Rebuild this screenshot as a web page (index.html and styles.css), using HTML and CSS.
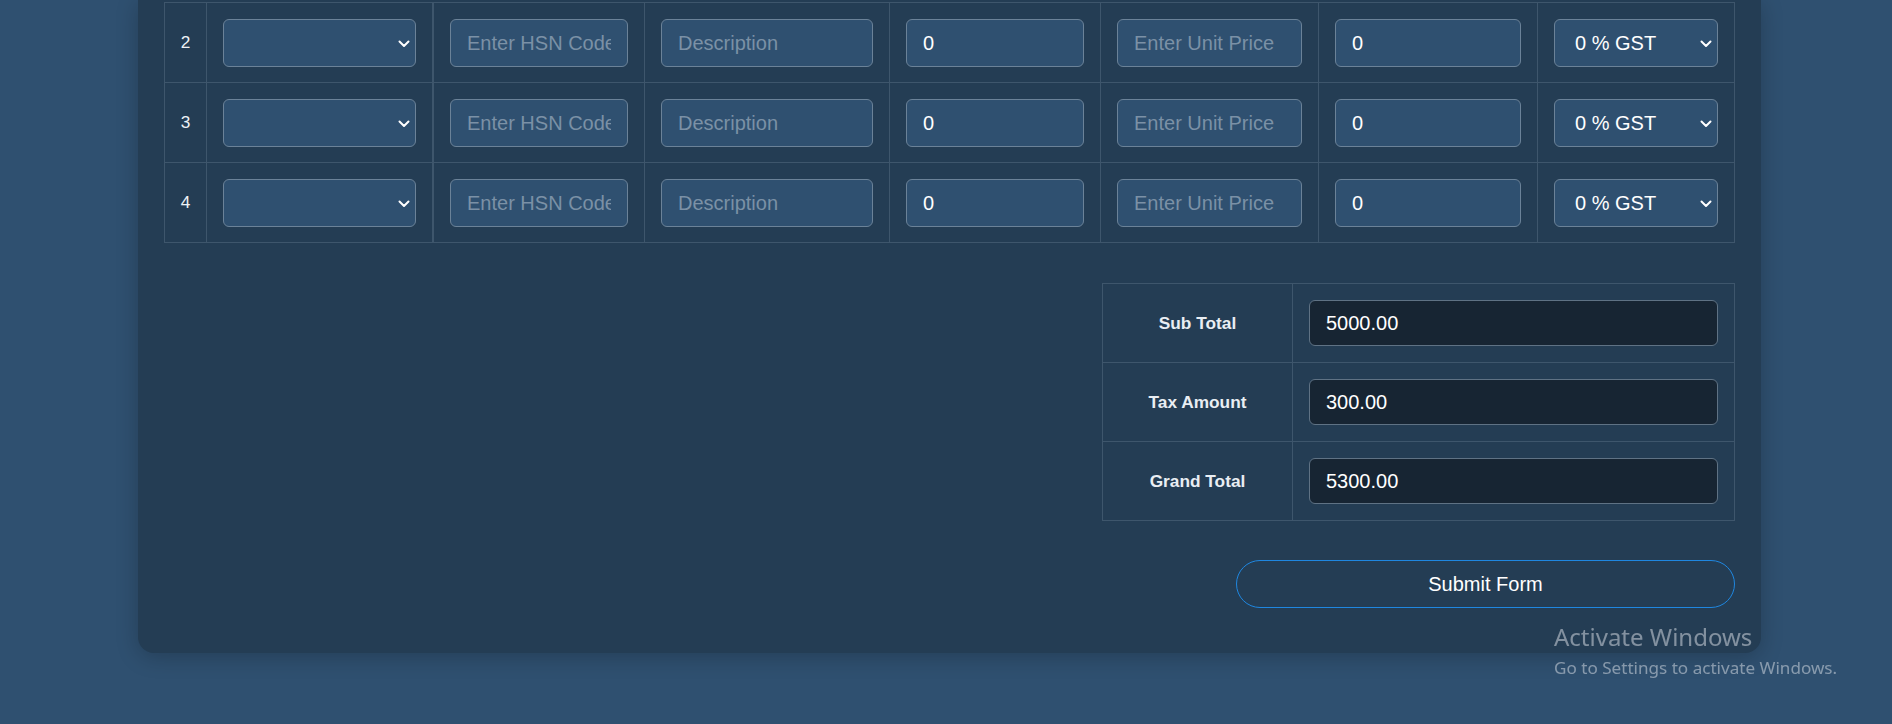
FILE: index.html
```html
<!DOCTYPE html>
<html lang="en">
<head>
<meta charset="utf-8">
<title>Invoice Items</title>
<link rel="stylesheet" href="styles.css">
</head>
<body>
<main class="card">
  <div class="items">
    <div class="item-row">
      <div class="cell num">2</div>
      <div class="cell"><span class="select-wrap"><select class="field" aria-label="Product"><option></option></select><svg class="chev" viewBox="0 0 12 8" aria-hidden="true"><path d="M1.5 1.5 6 6l4.5-4.5"/></svg></span></div>
      <div class="cell sep"><input class="field" type="text" placeholder="Enter HSN Code"></div>
      <div class="cell"><input class="field" type="text" placeholder="Description"></div>
      <div class="cell"><input class="field" type="text" value="0"></div>
      <div class="cell"><input class="field" type="text" placeholder="Enter Unit Price"></div>
      <div class="cell"><input class="field" type="text" value="0"></div>
      <div class="cell"><span class="select-wrap"><select class="field" aria-label="GST"><option>0 % GST</option></select><svg class="chev" viewBox="0 0 12 8" aria-hidden="true"><path d="M1.5 1.5 6 6l4.5-4.5"/></svg></span></div>
    </div>
    <div class="item-row">
      <div class="cell num">3</div>
      <div class="cell"><span class="select-wrap"><select class="field" aria-label="Product"><option></option></select><svg class="chev" viewBox="0 0 12 8" aria-hidden="true"><path d="M1.5 1.5 6 6l4.5-4.5"/></svg></span></div>
      <div class="cell sep"><input class="field" type="text" placeholder="Enter HSN Code"></div>
      <div class="cell"><input class="field" type="text" placeholder="Description"></div>
      <div class="cell"><input class="field" type="text" value="0"></div>
      <div class="cell"><input class="field" type="text" placeholder="Enter Unit Price"></div>
      <div class="cell"><input class="field" type="text" value="0"></div>
      <div class="cell"><span class="select-wrap"><select class="field" aria-label="GST"><option>0 % GST</option></select><svg class="chev" viewBox="0 0 12 8" aria-hidden="true"><path d="M1.5 1.5 6 6l4.5-4.5"/></svg></span></div>
    </div>
    <div class="item-row">
      <div class="cell num">4</div>
      <div class="cell"><span class="select-wrap"><select class="field" aria-label="Product"><option></option></select><svg class="chev" viewBox="0 0 12 8" aria-hidden="true"><path d="M1.5 1.5 6 6l4.5-4.5"/></svg></span></div>
      <div class="cell sep"><input class="field" type="text" placeholder="Enter HSN Code"></div>
      <div class="cell"><input class="field" type="text" placeholder="Description"></div>
      <div class="cell"><input class="field" type="text" value="0"></div>
      <div class="cell"><input class="field" type="text" placeholder="Enter Unit Price"></div>
      <div class="cell"><input class="field" type="text" value="0"></div>
      <div class="cell"><span class="select-wrap"><select class="field" aria-label="GST"><option>0 % GST</option></select><svg class="chev" viewBox="0 0 12 8" aria-hidden="true"><path d="M1.5 1.5 6 6l4.5-4.5"/></svg></span></div>
    </div>
  </div>

  <div class="summary">
    <div class="totals">
      <div class="tcell label">Sub Total</div>
      <div class="tcell"><input class="field total" type="text" value="5000.00" readonly></div>
      <div class="tcell label">Tax Amount</div>
      <div class="tcell"><input class="field total" type="text" value="300.00" readonly></div>
      <div class="tcell label">Grand Total</div>
      <div class="tcell"><input class="field total" type="text" value="5300.00" readonly></div>
    </div>
    <button class="submit" type="submit">Submit Form</button>
  </div>
</main>

<div class="watermark">
  <div class="wm-title">Activate Windows</div>
  <div class="wm-sub">Go to Settings to activate Windows.</div>
</div>
</body>
</html>
```

FILE: styles.css
```css
* {
  box-sizing: border-box;
}

html, body {
  margin: 0;
  padding: 0;
}

body {
  background: #2f5070;
  font-family: "Liberation Sans", Arial, sans-serif;
  color: #fff;
  height: 724px;
  overflow: hidden;
}

.card {
  margin-left: 138px;
  width: 1623px;
  background: #243d54;
  border-radius: 0 0 16px 16px;
  padding: 2px 26px 45px 26px;
  box-shadow: 0 4px 22px rgba(0, 0, 0, 0.22);
}

.items {
  width: 1571px;
  border-right: 1px solid #3e566c;
  border-bottom: 1px solid #3e566c;
}

.item-row {
  display: grid;
  grid-template-columns: 42px 226px 212px 245px 211px 218px 219px 197px;
}

.cell {
  border-left: 1px solid #3e566c;
  border-top: 1px solid #3e566c;
  padding: 16px 16px 15px 16px;
  display: flex;
  align-items: center;
}

.cell.sep {
  border-left: 2px solid #3e566c;
}

.cell.num {
  justify-content: center;
  font-size: 17.3px;
  color: #eef2f6;
  padding: 0;
}

.field {
  width: 100%;
  height: 48px;
  padding: 8px 16px;
  font-family: "Liberation Sans", Arial, sans-serif;
  font-size: 20px;
  line-height: 30px;
  color: #ffffff;
  background-color: #2f5070;
  border: 1px solid #6b8298;
  border-radius: 6px;
  outline: none;
}

.field::placeholder {
  color: #7b91a6;
  opacity: 1;
}

.select-wrap {
  position: relative;
  display: block;
  width: 100%;
}

select.field {
  -webkit-appearance: none;
  appearance: none;
  display: block;
  padding: 8px 30px 8px 20px;
}

.chev {
  position: absolute;
  right: 6px;
  top: 50%;
  width: 12px;
  height: 8px;
  margin-top: -3.5px;
  fill: none;
  stroke: #ffffff;
  stroke-width: 2;
  stroke-linecap: round;
  stroke-linejoin: round;
  pointer-events: none;
}

.summary {
  display: flex;
  flex-direction: column;
  align-items: flex-end;
  margin-top: 40px;
}

.totals {
  display: grid;
  grid-template-columns: 190px 442px;
  border-right: 1px solid #3e566c;
  border-bottom: 1px solid #3e566c;
}

.tcell {
  border-left: 1px solid #3e566c;
  border-top: 1px solid #3e566c;
  padding: 16px;
  display: flex;
  align-items: center;
}

.tcell.label {
  justify-content: center;
  font-weight: bold;
  font-size: 17.3px;
  color: #e9eef3;
}

.field.total {
  height: 46px;
  padding: 7px 16px;
  background-color: #172533;
  border-color: #5f7284;
}

.submit {
  margin-top: 39px;
  width: 499px;
  height: 48px;
  border: 1px solid #1f87e0;
  border-radius: 24px;
  background: transparent;
  color: #ffffff;
  font-family: "Liberation Sans", Arial, sans-serif;
  font-size: 20px;
}

.watermark {
  position: fixed;
  left: 1554px;
  top: 620px;
  color: rgba(225, 230, 235, 0.5);
  font-family: "Noto Sans", "Open Sans", sans-serif;
  pointer-events: none;
}

.wm-title {
  font-size: 24px;
  line-height: 34px;
}

.wm-sub {
  font-size: 17.1px;
  line-height: 22px;
  padding-top: 3px;
}
```
